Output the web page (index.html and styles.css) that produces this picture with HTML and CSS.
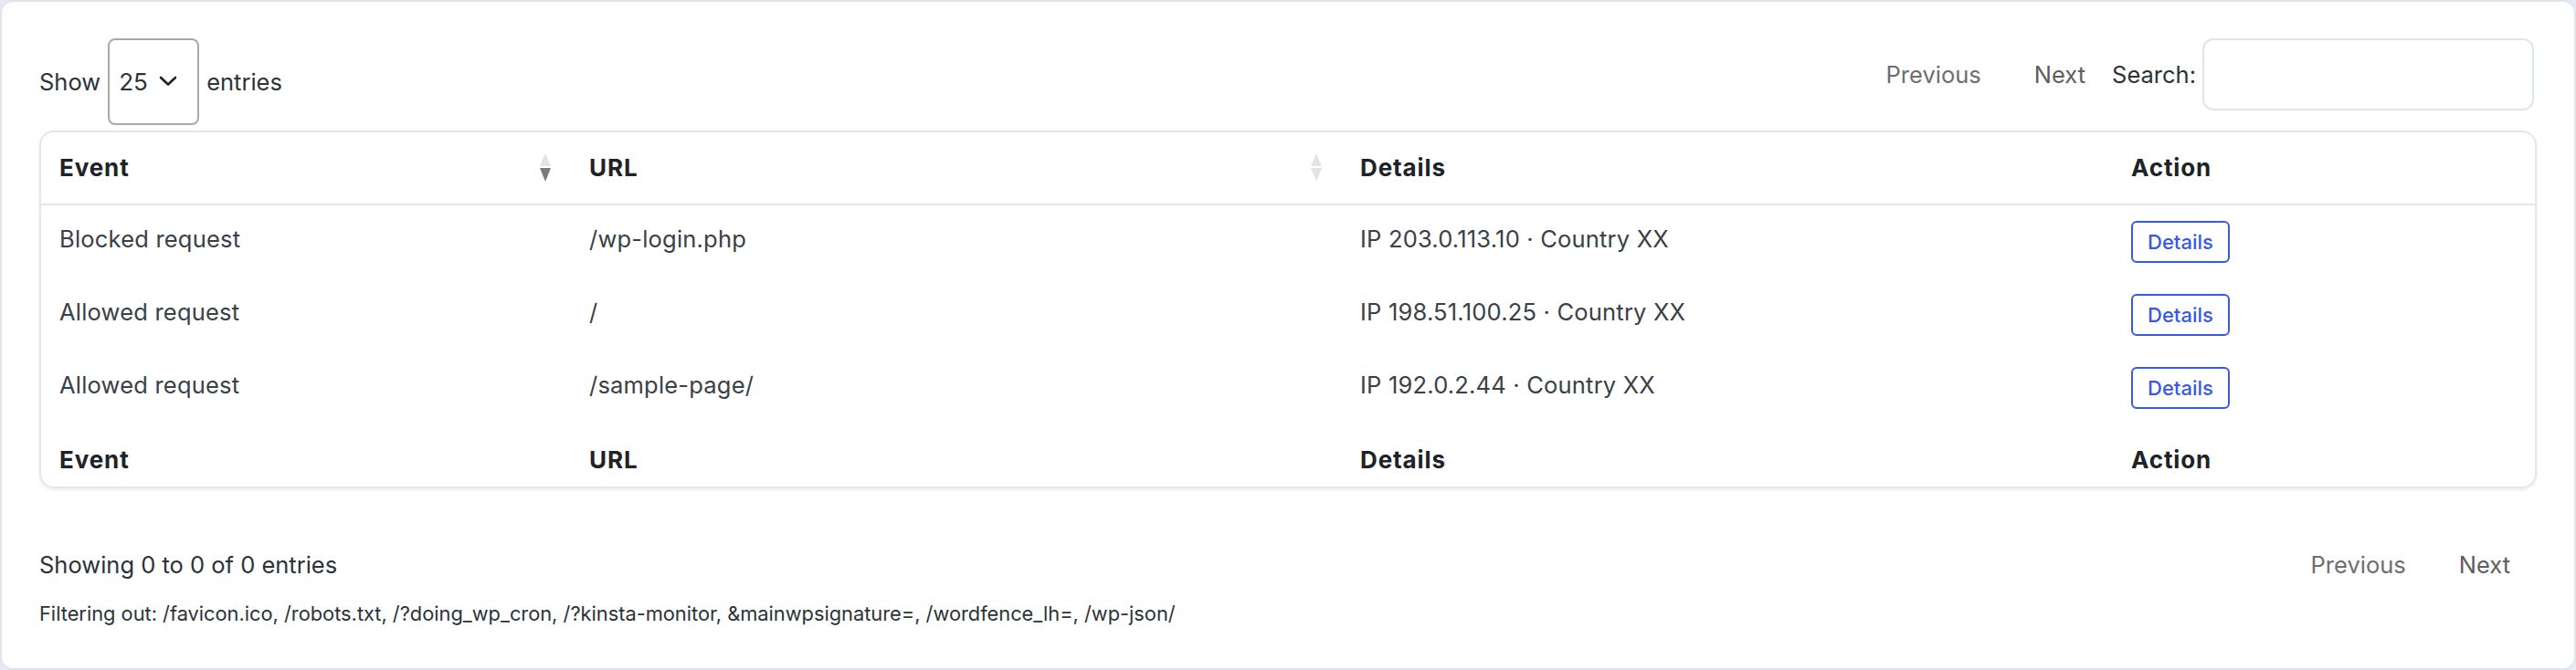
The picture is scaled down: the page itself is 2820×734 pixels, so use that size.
FILE: index.html
```html
<!DOCTYPE html>
<html lang="en">
<head>
    <meta charset="UTF-8">
    <meta name="viewport" content="width=device-width, initial-scale=1.0">
    <title>Request Log</title>
    <link rel="stylesheet" href="styles.css">
</head>
<body>
    <div class="log-card">
        <div class="dt-top">
            <div class="dt-length">
                <span>Show</span>
                <span class="select-wrap">
                    <select class="length-select">
                        <option>10</option>
                        <option selected>25</option>
                        <option>50</option>
                        <option>100</option>
                    </select>
                    <svg class="select-chevron" width="20" height="12" viewBox="0 0 20 12">
                        <path d="M2 2 L10 9.5 L18 2" fill="none" stroke="#1d2327" stroke-width="2.6" stroke-linecap="round" stroke-linejoin="round"/>
                    </svg>
                </span>
                <span>entries</span>
            </div>
            <div class="dt-right">
                <div class="paging">
                    <button class="page-btn disabled">Previous</button>
                    <button class="page-btn">Next</button>
                </div>
                <label class="dt-search">Search:<input type="search"></label>
            </div>
        </div>

        <div class="table-wrap">
            <table class="log-table">
                <colgroup>
                    <col class="col-event">
                    <col class="col-url">
                    <col class="col-details">
                    <col class="col-action">
                </colgroup>
                <thead>
                    <tr>
                        <th>Event<span class="sort"><i class="up"></i><i class="down active"></i></span></th>
                        <th>URL<span class="sort"><i class="up"></i><i class="down"></i></span></th>
                        <th>Details</th>
                        <th>Action</th>
                    </tr>
                </thead>
                <tbody>
                    <tr>
                        <td>Blocked request</td>
                        <td>/wp-login.php</td>
                        <td>IP 203.0.113.10 · Country XX</td>
                        <td class="action"><button class="details-btn">Details</button></td>
                    </tr>
                    <tr>
                        <td>Allowed request</td>
                        <td>/</td>
                        <td>IP 198.51.100.25 · Country XX</td>
                        <td class="action"><button class="details-btn">Details</button></td>
                    </tr>
                    <tr>
                        <td>Allowed request</td>
                        <td>/sample-page/</td>
                        <td>IP 192.0.2.44 · Country XX</td>
                        <td class="action"><button class="details-btn">Details</button></td>
                    </tr>
                </tbody>
                <tfoot>
                    <tr>
                        <th>Event</th>
                        <th>URL</th>
                        <th>Details</th>
                        <th>Action</th>
                    </tr>
                </tfoot>
            </table>
        </div>

        <div class="dt-bottom">
            <div class="dt-info">Showing 0 to 0 of 0 entries</div>
            <div class="paging">
                <button class="page-btn disabled">Previous</button>
                <button class="page-btn">Next</button>
            </div>
        </div>
        <p class="filter-note">Filtering out: /favicon.ico, /robots.txt, /?doing_wp_cron, /?kinsta-monitor, &amp;mainwpsignature=, /wordfence_lh=, /wp-json/</p>
    </div>
</body>
</html>
```

FILE: styles.css
```css
html {
    background-color: #e7e9f3;
}
body {
    margin: 0;
    font-family: 'Inter', 'Noto Sans', sans-serif;
    font-size: 25.5px;
    line-height: 31px;
    color: #3a4047;
}
.log-card {
    box-sizing: border-box;
    height: 734px;
    background-color: white;
    border: 2px solid #e1e4ef;
    border-radius: 14px;
    padding: 40px 41px 0;
}

/* top controls */
.dt-top {
    display: flex;
    justify-content: space-between;
    align-items: center;
}
.dt-length {
    display: flex;
    align-items: center;
    gap: 8px;
    color: #2c3338;
}
.select-wrap {
    position: relative;
    display: inline-block;
}
.length-select {
    appearance: none;
    -webkit-appearance: none;
    box-sizing: border-box;
    width: 100px;
    height: 95px;
    padding: 0 0 0 10px;
    font-family: inherit;
    font-size: 26px;
    color: #2c3338;
    background-color: white;
    border: 2px solid #a7aaad;
    border-radius: 8px;
}
.select-chevron {
    position: absolute;
    left: 56px;
    top: 41px;
    pointer-events: none;
}
.dt-right {
    display: flex;
    align-items: center;
    align-self: flex-start;
}
.dt-search {
    display: flex;
    align-items: center;
    color: #2c3338;
    margin-right: 3px;
}
.dt-search input {
    box-sizing: border-box;
    width: 363px;
    height: 79px;
    margin-left: 7px;
    border: 2px solid #e0e4ec;
    border-radius: 12px;
    font-size: 26px;
}
.paging {
    display: flex;
}
.page-btn {
    padding: 0 29px;
    background: none;
    border: none;
    font-family: inherit;
    font-size: 25.5px;
    color: #5e5e5e;
    cursor: pointer;
}
.page-btn.disabled {
    color: #6e6e6e;
    cursor: default;
}

/* table */
.table-wrap {
    margin-top: 6px;
    border: 2px solid #e2e6ef;
    border-radius: 16px;
    box-shadow: 0 2px 3px rgba(30, 40, 70, 0.08);
    overflow: hidden;
}
.log-table {
    width: 100%;
    table-layout: fixed;
    border-collapse: separate;
    border-spacing: 0;
}
.col-event { width: 580px; }
.col-url { width: 844px; }
.col-details { width: 844px; }
.log-table th {
    text-align: left;
    font-size: 26px;
    font-weight: 700;
    letter-spacing: 0.9px;
    color: #1d2327;
}
.log-table thead th {
    padding: 23px 20px 24px;
    border-bottom: 2px solid #e2e6ef;
}
.log-table tfoot th {
    padding: 23px 20px 14px;
}
.log-table tbody tr {
    height: 80px;
}
.log-table td {
    padding: 0 20px 8px;
    vertical-align: middle;
    letter-spacing: 0.2px;
}
.log-table td.action {
    padding-bottom: 0;
    letter-spacing: 0;
}

/* sort arrows */
.sort {
    float: right;
    display: flex;
    flex-direction: column;
    gap: 2px;
    margin-right: 2px;
}
.sort i {
    width: 0;
    height: 0;
    border-left: 6.5px solid transparent;
    border-right: 6.5px solid transparent;
}
.sort .up {
    border-bottom: 14px solid #e3e3e3;
}
.sort .down {
    border-top: 15px solid #e3e3e3;
}
.sort .down.active {
    border-top-color: #7b7b7b;
}

.details-btn {
    box-sizing: border-box;
    height: 46px;
    padding: 0 16px;
    font-family: inherit;
    font-size: 22px;
    font-weight: 500;
    color: #3858e9;
    background-color: white;
    border: 2px solid #3858e9;
    border-radius: 6px;
    cursor: pointer;
}

/* footer */
.dt-bottom {
    display: flex;
    justify-content: space-between;
    align-items: center;
    margin-top: 68px;
}
.dt-info {
    color: #2c3338;
}
.filter-note {
    margin: 25px 0 0;
    font-size: 21.8px;
    line-height: 27px;
    color: #2c3338;
}
```
